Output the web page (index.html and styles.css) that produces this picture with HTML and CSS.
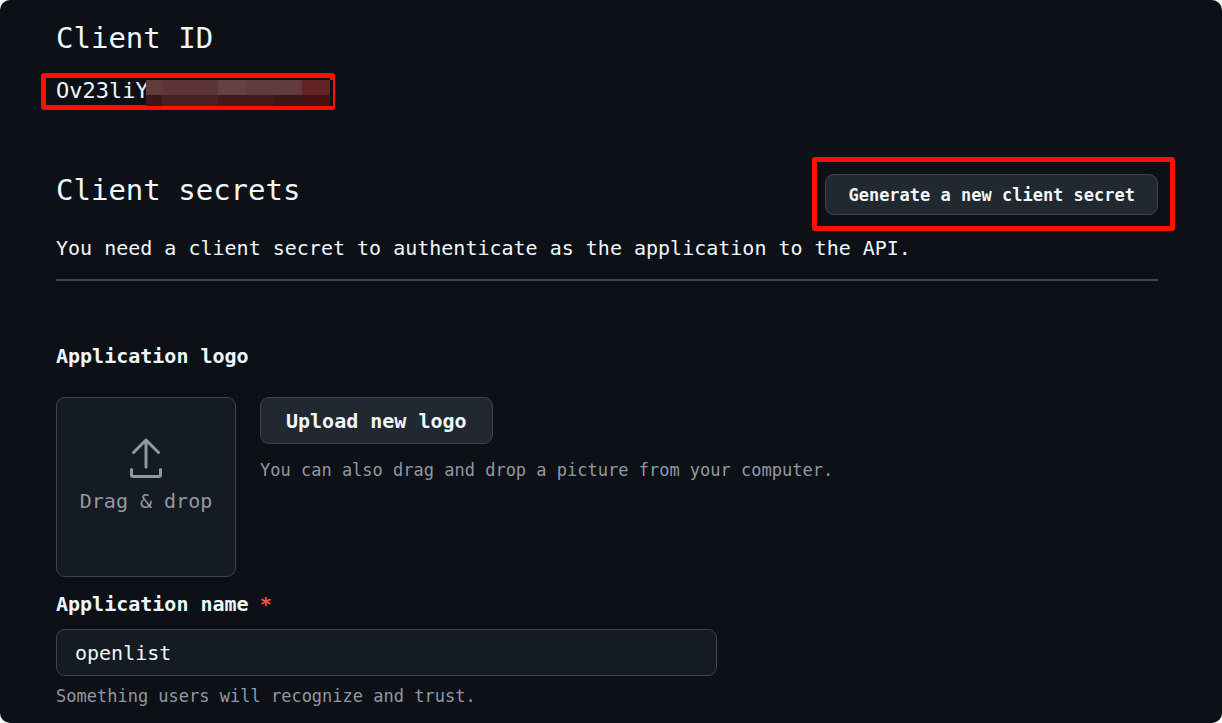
FILE: index.html
```html
<!DOCTYPE html>
<html lang="en">
<head>
  <meta charset="utf-8">
  <title>OAuth application</title>
  <link rel="stylesheet" href="styles.css">
</head>
<body>
  <main class="panel">
    <section class="client-id">
      <h2 class="heading">Client ID</h2>
      <div class="id-row">
        <span class="id-value">Ov23liY</span>
        <div class="callout callout-id"></div>
        <div class="mosaic" aria-hidden="true">
          <i class="m1"></i><i class="m2"></i><i class="m2"></i><i class="m3"></i><i class="m1"></i><i class="m1"></i><i class="m4"></i>
          <i class="d1"></i><i class="d2"></i><i class="d2"></i><i class="d3"></i><i class="d3"></i><i class="d1"></i><i class="d4"></i>
        </div>
      </div>
    </section>

    <section class="secrets">
      <div class="secrets-head">
        <h2 class="heading">Client secrets</h2>
        <div class="generate">
          <button class="button button-small" type="button">Generate a new client secret</button>
          <div class="callout callout-generate"></div>
        </div>
      </div>
      <p class="text">You need a client secret to authenticate as the application to the API.</p>
    </section>

    <form class="settings">
      <h3 class="label">Application logo</h3>
      <div class="logo-row">
        <div class="dropzone">
          <svg class="upload-icon" viewBox="0 0 34 42" aria-hidden="true">
            <path d="M17 30V3M4.500 15.500 17 3 29.500 15.500"/>
            <path d="M2.500 32.500V38a1.500 1.500 0 0 0 1.500 1.500H30a1.500 1.500 0 0 0 1.500-1.500V32.500"/>
          </svg>
          <span>Drag &amp; drop</span>
        </div>
        <div class="logo-side">
          <button class="button" type="button">Upload new logo</button>
          <p class="note">You can also drag and drop a picture from your computer.</p>
        </div>
      </div>
      <label class="label name-label" for="app-name"><span>Application name</span><span class="required">*</span></label>
      <input class="input" id="app-name" type="text" value="openlist">
      <p class="note">Something users will recognize and trust.</p>
    </form>
  </main>
</body>
</html>
```
FILE: styles.css
```css
* {
  box-sizing: border-box;
}

body {
  margin: 0;
  background: #ffffff;
  color: #f0f6fc;
  font-family: "DejaVu Sans Mono", "Liberation Mono", monospace;
  font-size: 20px;
  line-height: 32px;
}

.panel {
  min-height: 100vh;
  padding: 16px 64px 10px 56px;
  border-radius: 10px;
  background: #0d1117;
}

h2,
h3,
p {
  margin: 0;
}

.heading {
  font-size: 29px;
  font-weight: 400;
  line-height: 44px;
}

.id-row {
  position: relative;
  display: flex;
  margin-top: 15px;
}

.id-value {
  font-size: 22px;
}

.callout {
  position: absolute;
  border: 5px solid #ff1000;
  border-radius: 3px;
  pointer-events: none;
}

.callout-id {
  top: -2px;
  left: -15px;
  width: 294px;
  height: 37px;
}

.callout-generate {
  inset: -17px -17px -16px -13px;
}

.mosaic {
  position: absolute;
  top: 5px;
  left: 90px;
  display: grid;
  grid-template-columns: 16px repeat(6, 28px);
  grid-template-rows: 15px 11px;
  padding-right: 3px;
  background: #0d1117;
}

.m1 { background: #613a3c; }
.m2 { background: #5e3537; }
.m3 { background: #664044; }
.m4 { background: #652224; }
.d1 { background: #3d161a; }
.d2 { background: #492024; }
.d3 { background: #431a1c; }
.d4 { background: #451113; }

.secrets {
  margin-top: 67px;
  padding-bottom: 15px;
  border-bottom: 2px solid #3d444d;
}

.secrets-head {
  display: flex;
  justify-content: space-between;
  align-items: flex-start;
  margin-bottom: 17px;
}

.secrets-head .heading {
  line-height: 32px;
}

.generate {
  position: relative;
}

.button {
  height: 47px;
  padding: 0 25px;
  border: 1px solid #3d444d;
  border-radius: 9px;
  background: #212830;
  color: #f0f6fc;
  font: inherit;
  font-weight: 700;
}

.button-small {
  display: block;
  height: 41px;
  padding: 0 22px;
  font-size: 17px;
}

.label {
  display: block;
  font-size: 20px;
  font-weight: 700;
  line-height: 32px;
}

.settings {
  margin-top: 59px;
}

.logo-row {
  display: flex;
  gap: 24px;
  margin-top: 25px;
}

.dropzone {
  display: flex;
  flex-direction: column;
  align-items: center;
  width: 180px;
  height: 180px;
  padding-top: 39px;
  border: 1px solid #3d444d;
  border-radius: 9px;
  background: #151b23;
  color: #9198a1;
}

.upload-icon {
  width: 34px;
  height: 42px;
  margin-bottom: 6px;
  fill: none;
  stroke: #9198a1;
  stroke-width: 3;
  stroke-linecap: round;
  stroke-linejoin: round;
}

.note {
  margin-top: 8px;
  color: #9198a1;
  font-size: 17px;
  line-height: 24px;
}

.logo-side .note {
  margin-top: 14px;
}

.name-label {
  display: flex;
  gap: 11px;
  margin-top: 11px;
}

.required {
  color: #f85149;
}

.input {
  display: block;
  width: 60%;
  height: 47px;
  margin-top: 9px;
  padding: 0 18px;
  border: 1px solid #3d444d;
  border-radius: 9px;
  background: #151b23;
  color: #f0f6fc;
  font: inherit;
}
```
